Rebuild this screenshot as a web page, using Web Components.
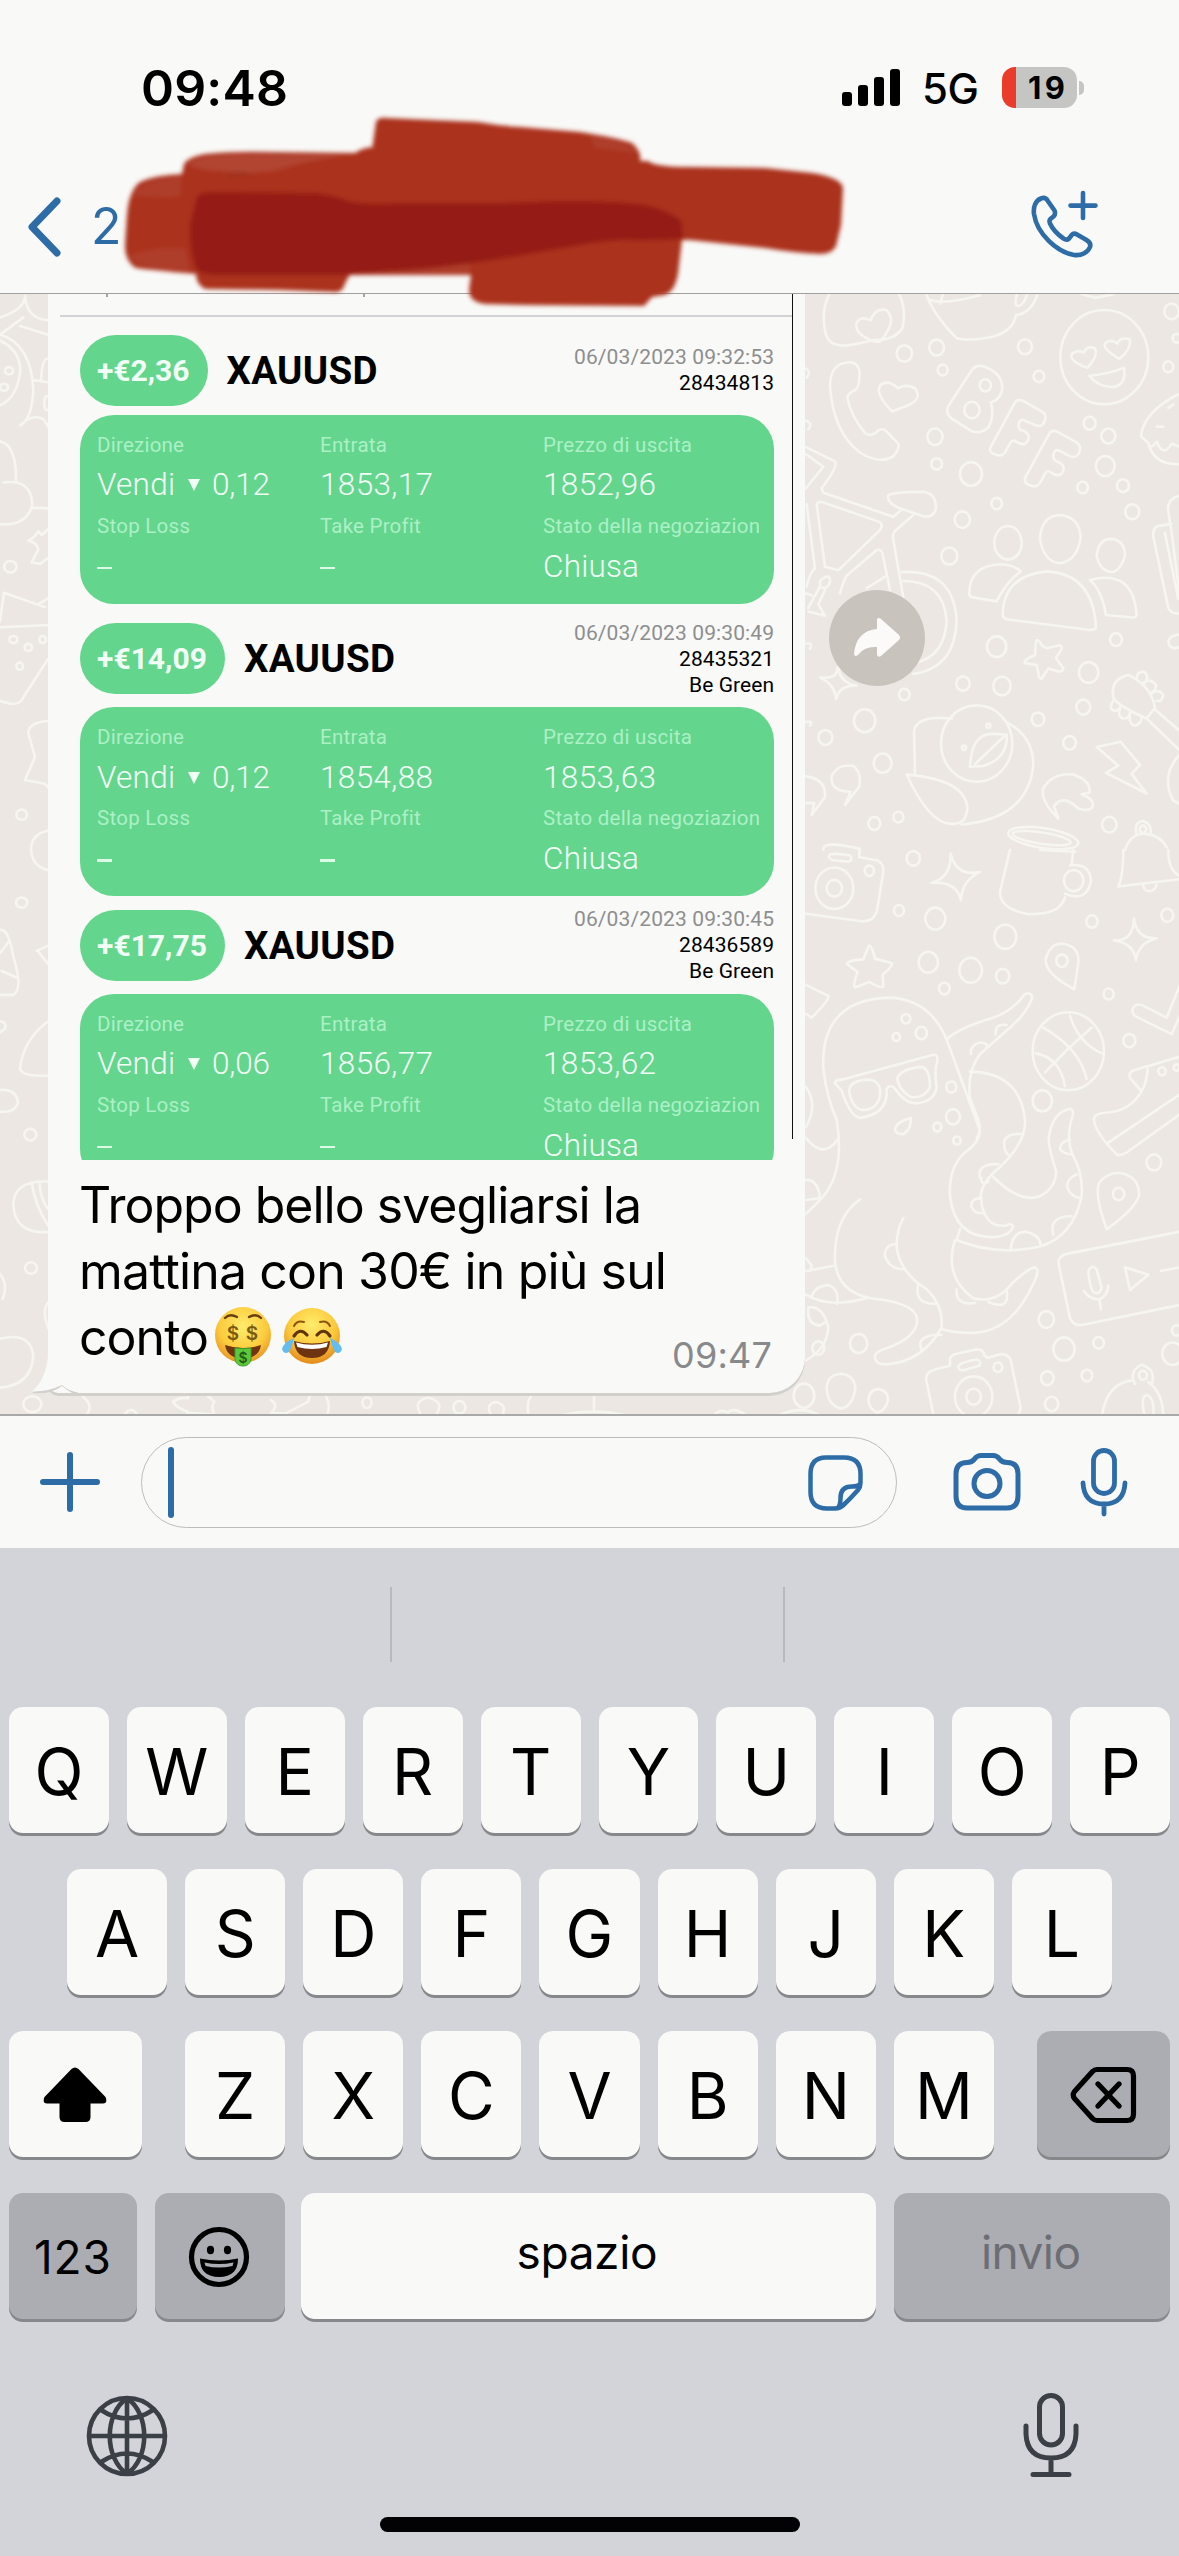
<!DOCTYPE html>
<html lang="it">
<head>
<meta charset="utf-8">
<title>Chat</title>
<style>
html,body{margin:0;padding:0;background:#f9f9f7}
body{width:1179px;height:2556px;overflow:hidden;font-family:Inter,"Liberation Sans",sans-serif;color:#000}
</style>
</head>
<body>
<chat-app></chat-app>
<script>
const define = (name, html, init) => customElements.define(name, class extends HTMLElement {
  connectedCallback() {
    if (this.shadowRoot) return;
    const root = this.attachShadow({ mode: 'open' });
    root.innerHTML = typeof html === 'function' ? html(this) : html;
    if (init) init(this, root);
  }
});

/* Single line of text tracked to an exact advance width. */
define('fit-text', `<style>:host{display:inline-block;white-space:nowrap;flex:none}span{display:inline-block}</style><span><slot></slot></span>`,
  (el, root) => {
    const w = +el.getAttribute('w');
    el.style.width = (+el.getAttribute('box') || w) + 'px';
    const s = root.querySelector('span');
    const n = el.textContent.length;
    const natural = s.getBoundingClientRect().width;
    s.style.letterSpacing = ((w - natural) / Math.max(1, n - 1)).toFixed(3) + 'px';
  });

define('status-bar', `<style>
:host{display:flex;height:175px;box-sizing:border-box;padding:62px 95px 0 141px;align-items:flex-start}
.time{font-weight:600;font-size:50px;line-height:52px}
.grow{flex:1}
.net{font-size:42px;line-height:54px;margin:0 23px 0 22px;font-weight:500}
.sig{margin-top:7px}
.bat{display:flex;align-items:center;margin-top:5px;gap:2px}
.cell{width:75px;height:41px;border-radius:13px;background:linear-gradient(90deg,#eb3b2b 14px,#c5c6c3 14px);font-weight:700;font-size:31px;line-height:41px;box-sizing:border-box;padding-left:26px}
.nub{width:5px;height:14px;background:#c5c6c3;border-radius:0 5px 5px 0}
</style>
<fit-text class="time" w="147">09:48</fit-text><div class="grow"></div>
<svg class="sig" width="58" height="38" viewBox="0 0 58 38"><rect y="23" width="10" height="14" rx="3"/><rect x="16" y="16" width="10" height="21" rx="3"/><rect x="32" y="8" width="10" height="29" rx="3"/><rect x="48" width="10" height="37" rx="3"/></svg>
<fit-text class="net" w="57">5G</fit-text>
<div class="bat"><div class="cell"><fit-text w="37">19</fit-text></div><div class="nub"></div></div>`);

define('chat-header', `<style>
:host{display:flex;height:118px;box-sizing:border-box;padding:14px 80px 0 26px;color:#2e6ca8;align-items:flex-start;justify-content:space-between}
.back{display:flex;gap:29px;align-items:center;margin-top:6px}
.n{font-size:50px;line-height:62px}
</style>
<div class="back"><svg width="36" height="62" viewBox="0 0 36 62"><path d="M31 6 L6 32 L31 58" fill="none" stroke="#2e6ca8" stroke-width="7" stroke-linecap="round" stroke-linejoin="round"/></svg><span class="n">2</span></div>
<svg width="70" height="72" viewBox="1029 189 70 72" fill="none" stroke="#2e6ca8" stroke-width="4.6" stroke-linecap="round" stroke-linejoin="round"><path d="M1041 198.500C1036 200.500 1033 206 1034 214C1037 234 1057 252 1074 255C1082 256 1088 252 1090 247C1091 244 1089 241.500 1086.500 240L1077 234.500C1074.500 233 1072.500 233.500 1071 236L1069 238.500C1067.500 240 1065.500 240 1063.500 238.500C1057 234 1053 230 1050 223.500C1049 221 1049.500 219.500 1051 218.500L1053.500 216.500C1055.500 214.500 1055.500 213 1054.500 210.500L1047.500 200.500C1046 198 1043.500 197.500 1041 198.500Z"/><path d="M1083 193V218M1070.500 205.600H1095.500"/></svg>`);

/* Marker strokes laid over the contact's name. */
define('marker-scribble', `<style>:host{position:absolute;left:0;top:0;pointer-events:none;line-height:0}</style>
<svg width="870" height="320" viewBox="0 0 870 320"><defs><filter id="s" x="-5%" y="-5%" width="110%" height="110%"><feGaussianBlur stdDeviation="1.900"/></filter></defs>
<g filter="url(#s)">
<path fill="#ab321d" d="M372 150L376 122Q378 117 386 118L478 122Q500 126 520 127L580 132Q618 138 632 143Q642 152 640 161L648 161Q655 167 690 167L765 168L812 173Q842 178 843 188L841 225L836 246Q832 254 820 254Q795 253 765 248L690 240L682 240L679 265Q677 292 664 295L652 297L644 306L525 305L485 304Q469 302 469 290L471 275L350 275Q346 280 344 286Q342 293 333 292L280 290L205 289Q196 284 196 274Q150 270 136 268Q125 262 125 245L127 215Q129 190 140 182Q155 175 182 174L184 164Q188 157 205 154Q235 151 270 152L355 153Q362 148 372 147Z"/>
<path fill="#b5503f" opacity=".6" d="M188 164Q202 154 240 154L350 155Q310 160 285 168Q260 176 218 171Q196 170 188 164Z"/>
<path fill="#b5503f" opacity=".4" d="M132 196Q140 180 182 176L180 197Q155 198 132 196ZM128 256Q150 246 185 248L190 271Q140 271 128 256ZM590 136Q634 142 638 153Q615 151 595 148ZM350 272Q420 264 470 264V274H350Z"/>
<path fill="#951f14" d="M197 196Q200 192 215 192L315 193Q335 195 348 201Q365 205 400 203L500 203L560 201Q620 201 645 205Q672 211 682 222L683 239Q650 241 625 240Q600 241 575 246L500 259Q430 270 380 272L340 275H220Q199 275 196 268Q189 250 190 225Z"/>
<path d="M228 176Q240 171 250 175" fill="none" stroke="#8c2a1c" stroke-width="1.500"/>
</g></svg>`);

const dots = (list) => list.map(([x, y, r]) => `<circle cx="${x}" cy="${y}" r="${r}"/>`).join('');

define('chat-wallpaper', () => `<style>:host{position:absolute;inset:0;background:#ece7e2;line-height:0;z-index:-1}
svg *{vector-effect:non-scaling-stroke}</style>
<svg width="1179" height="1122" viewBox="0 294 1179 1122" fill="none" stroke="#f7f5f0" stroke-width="2.600" stroke-linecap="round" stroke-linejoin="round">
<g transform="translate(780 290) scale(.3333 .3571)">
<path d="M150 8Q120 60 138 125Q150 160 205 155Q262 145 280 140Q345 142 368 105Q380 50 355 8M285 145Q225 125 229 95Q240 70 272 85Q285 50 318 56Q355 85 300 145ZM437 8Q460 70 530 135Q560 145 640 130Q700 115 708 70Q755 65 773 10M445 25Q480 45 600 15M490 8L480 38M712 8Q700 45 715 45Q735 40 742 8M905 12L945 22L1000 12"/>
<circle cx="973" cy="188" r="132" /><path d="M922 218Q868 200 875 180Q890 165 912 175Q920 155 945 163Q955 185 922 218ZM1018 193Q968 165 975 150Q990 135 1012 150Q1020 130 1050 138Q1055 165 1018 193ZM928 240Q985 235 1032 218Q1040 265 1000 272Q950 270 928 240Z"/>
<path d="M190 205Q150 215 150 270Q160 400 240 455Q300 490 340 465Q360 445 355 430L315 392Q300 385 285 402Q265 410 255 400Q210 350 202 300Q205 290 225 280Q240 275 238 225Q230 195 190 205ZM336 340Q285 290 300 268Q320 248 355 275Q375 262 405 275Q430 305 380 325Z"/>
<path d="M575 225Q590 205 620 217Q675 240 665 285Q655 310 632 315Q645 350 625 385Q600 405 575 395L515 360Q495 345 505 325ZM632 440L705 315Q715 302 735 313L785 340Q805 350 790 375Q780 385 765 378L733 365Q720 360 717 372Q712 388 725 393Q755 402 742 425Q732 438 710 425Q697 418 692 427L675 455Q665 468 645 460Q625 455 632 440ZM736 525L808 402Q818 388 838 400L890 427Q908 438 895 460Q885 472 870 465L838 450Q825 445 822 457Q815 472 830 480Q860 490 847 512Q835 525 815 512Q802 503 796 513L782 538Q770 555 750 547Q730 540 736 525Z"/>
<path d="M1200 290Q1090 340 1083 410L1105 428Q1110 450 1130 425Q1150 470 1175 430L1200 440M1105 428Q1120 490 1200 488M1130 383H1150M1165 330L1180 320"/>
<path d="M78 440L165 480Q175 495 125 555L130 568L340 635L365 615M78 460L130 495L78 555M325 575Q345 565 430 565Q468 570 468 610Q465 635 435 635L355 610Q320 595 325 575ZM110 600Q115 590 130 595L300 650Q310 660 300 672L175 785L135 775ZM400 630L345 675Q335 685 340 700L370 860M180 850Q190 815 200 800L290 728Q305 725 308 740L330 840M80 600L105 780Q90 790 80 830M320 800L260 835M120 815Q150 790 150 815Q145 840 120 832ZM120 830L85 890M135 840L115 880L135 912L85 900M78 850L95 855"/>
<path d="M365 790Q520 780 530 925Q525 1060 400 1075M370 815Q490 815 500 925Q495 1020 415 1042"/>
<ellipse cx="684" cy="708" rx="41" ry="47"/><path d="M780 695Q785 632 840 630Q900 635 902 695Q890 760 838 765Q790 760 780 695ZM950 745Q955 698 993 697Q1035 700 1035 745Q1020 790 990 790Q960 785 950 745ZM568 855Q565 770 665 768Q700 770 723 788Q680 815 650 872L575 860ZM668 910Q670 800 800 788Q940 795 948 945Q945 952 930 952L680 922Q668 918 668 910ZM930 812Q1060 780 1070 910Q1068 918 1055 917L978 910Q965 840 930 812ZM1200 575Q1160 585 1165 620L1175 680L1200 860M1175 655L1130 662Q1118 670 1120 690L1165 890Q1175 910 1200 905M1155 680L1195 865"/>
<path d="M768 983Q775 975 785 995L800 1003L838 995Q850 998 842 1010L828 1030L850 1060Q848 1070 835 1068L805 1060L785 1088Q775 1090 775 1070L770 1050L735 1045Q730 1035 765 1022ZM120 1085Q160 1090 170 1070Q175 1040 178 1070Q185 1100 230 1108Q180 1105 168 1145Q165 1105 120 1085Z"/>
<path d="M1045 1078Q990 1090 1000 1140Q1005 1160 1100 1200L1125 1170Q1115 1110 1045 1078ZM1070 1090Q1070 1065 1095 1070Q1110 1085 1090 1105M1090 1100Q1110 1085 1128 1105Q1130 1120 1110 1130M1115 1130Q1140 1115 1150 1135Q1145 1155 1130 1150M1000 1150Q985 1170 1000 1178Q1020 1180 1022 1165M1022 1168Q1010 1195 1030 1200Q1050 1200 1050 1180M1050 1185Q1045 1215 1065 1220Q1085 1215 1085 1195M1125 1175L1200 1235M1100 1200L1200 1290M1200 1300Q1140 1360 1180 1430L1200 1440"/>
<circle cx="590" cy="1270" r="107"/><path d="M515 1200Q410 1190 402 1235L405 1355M680 1210Q760 1250 760 1330Q745 1480 545 1497M380 1357Q555 1370 562 1450Q560 1495 520 1495Q450 1500 380 1357ZM570 1335Q575 1240 640 1243L680 1245Q685 1310 610 1333ZM585 1328L675 1248M950 1280L1022 1265L1080 1330L1055 1355L1100 1410L978 1352L1015 1332ZM835 1480Q780 1430 790 1395Q820 1350 880 1357Q935 1375 928 1408L905 1412Q945 1425 938 1448Q925 1462 895 1452Q850 1410 822 1445ZM195 1442L212 1405Q150 1405 155 1360Q175 1325 220 1333Q245 1350 238 1390ZM78 1362Q140 1370 135 1420L95 1470L103 1437H80"/>
<ellipse cx="790" cy="1535" rx="106" ry="28" transform="rotate(8 790 1535)"/><ellipse cx="785" cy="1535" rx="88" ry="16" transform="rotate(8 785 1535)"/><path d="M1070 1525Q1060 1490 1090 1487Q1115 1495 1112 1520M1035 1568Q1050 1525 1090 1522Q1140 1525 1160 1560M130 1568Q125 1540 240 1565M78 1210Q100 1205 90 1220M78 990Q100 985 90 1005M78 220Q95 230 80 245M78 365Q100 375 85 390M1200 1000Q1170 1010 1165 985Q1170 965 1200 965"/>
${dots([[373,178,23],[470,161,22],[488,224,15],[735,159,21],[777,242,16],[616,267,17],[576,336,23],[465,411,23],[470,487,16],[573,515,33],[650,598,16],[547,643,23],[508,745,24],[929,373,18],[985,409,21],[976,493,28],[908,553,16],[1029,548,18],[1057,621,21],[1175,60,22],[1165,215,15],[1190,135,12],[650,999,29],[1008,979,18],[926,1071,29],[549,1102,20],[666,1109,26],[373,1133,16],[910,1168,21],[774,1202,19],[869,1268,19],[254,1206,32],[136,1253,21],[308,1325,27],[283,1494,18],[355,1476,15],[988,1497,22],[625,1220,6],[552,1282,6],[1089,1510,10]])}
</g>
<g transform="translate(780 850) scale(.3333 .3645)">
<path d="M78 175L240 195Q285 200 292 160L310 60Q312 35 290 28L238 20V0M150 12Q175 8 210 15Q220 28 205 32L160 28Q140 22 150 12ZM455 90Q515 75 512 10Q530 75 600 60Q545 85 543 138Q530 85 455 90ZM690 0L660 115Q660 160 740 175Q840 180 855 130M880 0L875 40M855 120Q920 145 933 85Q930 35 870 42M780 0L885 5M1030 0Q1030 70 1015 100L1200 80M1090 98Q1095 115 1110 113Q1130 110 1130 90M1165 0Q1165 60 1200 70"/>
<circle cx="163" cy="105" r="57"/><circle cx="163" cy="105" r="23"/><circle cx="268" cy="57" r="14"/><circle cx="881" cy="84" r="29"/>
<path d="M267 262Q275 260 285 298L335 310Q340 318 308 342L310 375Q300 380 268 362L225 377Q218 370 233 335L200 312Q205 302 250 300ZM1002 248Q1060 250 1062 188Q1070 245 1130 242Q1075 255 1068 302Q1060 255 1002 248ZM78 370L145 400Q150 410 95 460L78 450M883 382Q795 340 797 300Q810 255 850 257Q900 265 895 310ZM1200 370L1160 460L1085 425Q1065 420 1058 437Q1055 450 1070 458L1175 505L1200 455"/>
<path d="M130 600Q120 410 330 405Q450 410 500 520L560 670L600 770Q600 800 555 830Q505 870 510 950Q525 1065 640 1062Q690 1060 700 1032Q690 1022 680 1030Q610 1040 602 950Q605 910 660 870Q740 800 735 740Q720 610 570 608M130 600Q140 680 170 740Q195 880 130 950Q110 970 78 998M500 520Q530 490 640 460Q700 440 735 395Q755 390 757 405Q740 450 680 495L600 560Q560 610 570 680L595 740Q605 770 590 790M78 790Q130 850 172 795M78 905Q115 905 120 955L78 960M78 650Q115 700 78 760"/>
<path d="M165 640Q165 630 185 630L460 562Q475 560 472 580Q462 605 470 650Q465 690 410 695Q375 695 345 655Q330 640 320 655Q325 725 240 735Q210 730 185 660ZM208 665Q205 632 265 630Q305 632 300 675Q290 715 245 713Q215 705 208 665ZM352 625Q365 600 425 595Q450 600 450 650Q435 680 395 678Q355 660 352 625ZM345 765Q350 745 392 735Q395 765 370 780Q345 780 345 765Z"/>
<circle cx="865" cy="552" r="107"/><path d="M790 487Q900 545 920 628M870 455Q895 530 970 560M768 558Q840 570 855 648M935 487L865 545L795 610"/>
<path d="M1200 567L1060 605Q1045 610 1050 625L1085 662Q1050 715 985 720Q940 722 942 740Q945 775 1010 835Q1020 840 1040 830L1200 725M985 803L1200 670M1103 600Q1100 640 1085 662"/>
<path d="M640 897Q720 970 780 950Q830 925 828 880Q800 800 808 780Q820 720 870 710Q882 710 878 730Q855 790 880 840Q910 890 905 950Q880 1060 780 1088Q650 1115 530 1070M530 1070L540 1040M525 1070Q490 1170 580 1230Q650 1245 695 1190Q740 1150 765 1145Q780 1150 765 1180Q700 1320 580 1325Q520 1325 485 1315M240 958Q160 1010 165 1130Q175 1220 290 1232Q410 1245 412 1290Q410 1340 310 1370Q280 1380 285 1395Q290 1415 330 1410Q430 1400 485 1310Q490 1250 440 1205Q360 1160 350 1090Q350 1040 370 1010M980 1040Q940 940 960 910Q990 880 1030 888Q1080 900 1077 950Q1060 990 980 1040Z"/>
<path d="M573 560Q570 535 600 528Q625 530 620 540M647 505Q645 475 680 480M673 800Q680 775 730 780M690 840Q670 830 673 800M600 900Q590 860 655 862M605 900Q600 920 625 910M605 955Q570 955 575 980Q585 1000 610 995M870 795Q840 800 840 820Q850 835 878 835M890 890Q860 900 862 925Q870 950 900 955M820 1055Q805 1005 875 1005M692 1098Q695 1050 735 1047Q780 1055 782 1085M350 1080Q310 1085 315 1115Q330 1150 372 1150M415 1190Q400 1245 465 1245M425 1370Q405 1330 485 1330M530 1205Q525 1250 585 1243M625 1240Q690 1265 680 1210M78 1155L165 1140M78 1120L95 1140L90 1155M95 1225Q110 1190 150 1195Q180 1210 170 1245M78 1220Q150 1260 265 1228M85 1255Q130 1250 145 1310Q140 1370 78 1400M85 1260Q80 1300 120 1305L137 1295"/>
<path d="M1200 1047L860 1108Q830 1115 837 1140L870 1285Q880 1305 905 1303L1200 1248M925 1155Q935 1135 950 1150L965 1200Q960 1220 945 1215Q930 1210 925 1155ZM912 1210Q930 1235 960 1232Q985 1220 985 1195M958 1232L963 1260M1035 1145L1105 1165L1050 1207ZM1143 1155L1200 1145M462 1557L438 1450Q440 1430 465 1425L510 1415V1395Q515 1385 530 1382L590 1370Q612 1370 612 1385L622 1393L665 1383Q688 1385 692 1400L722 1530Q720 1550 700 1557M535 1418Q540 1405 590 1398Q605 1400 598 1415L550 1427Q535 1428 535 1418ZM965 1557Q980 1460 1060 1455M1105 1460Q1150 1490 1150 1557M1095 1557Q1080 1500 1100 1495Q1125 1500 1120 1557M0 1550Q70 1520 130 1557M160 1550H210"/>
<circle cx="581" cy="1500" r="56"/><circle cx="581" cy="1500" r="22"/><circle cx="654" cy="1419" r="13"/><path d="M1065 1465Q1045 1430 1085 1412Q1130 1425 1115 1465"/><circle cx="1089" cy="1441" r="12"/>
<path d="M140 1480Q140 1440 182 1437Q225 1440 226 1480Q215 1530 182 1532Q145 1525 140 1480ZM265 1510Q268 1480 294 1479Q325 1482 324 1510Q315 1540 293 1543Q270 1538 265 1510Z"/><ellipse cx="72" cy="1497" rx="31" ry="33"/>
${dots([[400,23,20],[357,166,15],[466,188,30],[676,238,33],[445,308,29],[572,330,34],[668,346,20],[493,380,16],[936,196,17],[846,304,17],[986,395,15],[1162,179,18],[1048,523,18],[378,463,13],[424,502,17],[349,513,11],[514,650,15],[519,732,21],[472,760,12],[531,797,11],[787,688,29],[1146,607,11],[1190,597,9],[1122,857,22],[1016,944,17],[799,1288,23],[852,1369,32],[956,1352,16],[802,1449,19],[921,1442,16],[236,1354,26],[1178,1382,31],[1190,1318,14],[815,1520,20],[115,1366,18]])}
</g>
<g transform="translate(0 290) scale(.3333 .7207)">
<path d="M0 62Q95 75 100 140Q95 180 60 188M0 70Q65 85 60 115Q50 150 0 160M0 38Q70 28 75 10M0 62L70 38M60 50L144 62M75 8Q80 40 144 42M123 127Q125 95 144 95M100 125L144 128M80 180Q130 170 144 190M0 210Q50 215 48 265M10 267Q95 262 97 298Q80 328 0 325M95 302L144 303M85 348Q100 345 115 335L125 340L144 332M85 348Q110 350 115 360L95 378L120 380L144 372M0 460L12 420L135 440M118 435L144 428M0 468L144 465M0 570Q60 580 70 565L144 512M144 598Q85 600 85 615Q100 640 105 648L75 680L135 685L144 690M144 750Q95 755 93 775Q95 800 144 805M110 917L144 910M115 918L144 935M0 888Q25 885 40 925Q70 970 40 978H0M5 945L55 955M0 920L25 905M144 1015Q70 1040 60 1080Q65 1092 144 1090M40 1270Q40 1235 144 1237M40 1270Q45 1310 144 1307M95 1238Q105 1270 144 1298M118 1237Q120 1260 144 1275M0 1365Q25 1380 8 1400M0 1455Q90 1445 100 1478Q95 1520 0 1523M0 1015Q20 1015 15 1025L0 1030M0 1110Q50 1108 54 1128Q45 1142 0 1140M144 1405Q125 1415 144 1440"/>
<ellipse cx="27" cy="112" rx="12" ry="5"/><ellipse cx="12" cy="135" rx="12" ry="5"/><ellipse cx="31" cy="384" rx="19" ry="8"/><ellipse cx="40" cy="485" rx="12" ry="5"/><ellipse cx="85" cy="496" rx="11" ry="5"/><ellipse cx="128" cy="485" rx="10" ry="5"/><ellipse cx="59" cy="522" rx="10" ry="5"/><ellipse cx="65" cy="728" rx="16" ry="7"/><ellipse cx="65" cy="850" rx="17" ry="7"/><ellipse cx="91" cy="1172" rx="18" ry="8"/><ellipse cx="93" cy="1357" rx="18" ry="8"/><ellipse cx="97" cy="1546" rx="27" ry="11"/><ellipse cx="141" cy="157" rx="8" ry="10"/>
</g>
<g transform="translate(0 1380) scale(.7519 .3333)"><path d="M110 50Q125 75 115 105M230 65Q240 50 250 55V45M230 65Q235 85 250 95Q240 100 285 103Q280 80 285 65L275 45M360 60Q372 75 360 100H380L410 65L412 45M434 50Q440 80 435 105M165 105Q175 75 183 105M703 105Q700 65 706 50M790 50V95M748 105Q790 85 830 105M950 105Q958 85 968 98Q975 80 992 105"/><ellipse cx="488" cy="68" rx="6" ry="16"/><path d="M560 105Q548 60 570 53Q592 65 580 105M653 105Q645 70 660 66Q675 75 668 105"/><ellipse cx="611" cy="82" rx="8" ry="19"/></g>
</svg>`);

define('trade-entry', (el) => {
  const a = (n) => el.getAttribute(n);
  return `<style>
:host{display:block;width:694px;font-family:Roboto,"Liberation Sans",sans-serif;flex:none}
.head{display:flex;height:71px;align-items:center}
.pill{height:71px;border-radius:36px;background:#63d58d;color:#f2fff6;font-weight:700;font-size:30px;line-height:71px;padding:0 18px 0 17px}
.sym{font-weight:700;font-size:38.500px;line-height:71px;margin-left:19px}
.meta{margin-left:auto;display:flex;flex-direction:column;align-items:flex-end;font-size:21px;line-height:26px}
.meta .d{color:#8d8e90}
.card{margin-top:${a('gap')}px;height:189px;box-sizing:border-box;background:#63d58d;border-radius:34px;padding:10px 15px 0 17px;display:grid;grid-template-columns:223px 223px 216px;grid-template-rows:repeat(4,40.600px)}
.l{font-size:20.500px;line-height:40px;color:#abf0c6;overflow:hidden}
.v{font-size:31.500px;line-height:40px;color:#f4fff8;display:flex;align-items:center;font-weight:350}
.dash{width:15px;height:2.500px;background:#dcfae6;margin-top:3px}
.tri{width:0;height:0;border:6.500px solid transparent;border-top:12px solid #f2fff6;border-bottom:0;margin:0 12px 0 13px;flex:none}
</style>
<div class="head"><div class="pill"><fit-text w="${a('pw')}">${a('profit')}</fit-text></div>
<fit-text class="sym" w="151">XAUUSD</fit-text>
<div class="meta"><fit-text class="d" w="200">${a('date')}</fit-text><fit-text w="95">${a('order')}</fit-text>${a('note') ? `<fit-text w="85">${a('note')}</fit-text>` : ''}</div></div>
<div class="card">
<div class="l"><fit-text w="87">Direzione</fit-text></div><div class="l"><fit-text w="67">Entrata</fit-text></div><div class="l"><fit-text w="149">Prezzo di uscita</fit-text></div>
<div class="v"><fit-text w="78">Vendi</fit-text><i class="tri"></i><fit-text w="58">${a('lots')}</fit-text></div><div class="v"><fit-text w="113">${a('entry')}</fit-text></div><div class="v"><fit-text w="113">${a('exit')}</fit-text></div>
<div class="l"><fit-text w="93">Stop Loss</fit-text></div><div class="l"><fit-text w="100">Take Profit</fit-text></div><div class="l"><fit-text w="217">Stato della negoziazion</fit-text></div>
<div class="v"><i class="dash"></i></div><div class="v"><i class="dash"></i></div><div class="v"><fit-text w="96">Chiusa</fit-text></div>
</div>`;
});

define('money-emoji', `<style>:host{display:block;line-height:0}text{font:600 19px Inter,sans-serif;fill:#7a5a10;text-anchor:middle}</style>
<svg width="58" height="62" viewBox="0 0 58 62" role="img"><defs><radialGradient id="g" cx=".5" cy=".35" r=".7"><stop offset="0" stop-color="#ffec6c"/><stop offset=".6" stop-color="#fccb3d"/><stop offset="1" stop-color="#e48a1c"/></radialGradient></defs>
<circle cx="29" cy="29" r="28" fill="url(#g)"/><path d="M11 12Q16 7 23 11M35 11Q42 7 47 12" fill="none" stroke="#6b3d0c" stroke-width="2.400" stroke-linecap="round"/>
<text x="19" y="34">$</text><text x="38" y="34">$</text>
<path d="M11 39Q29 45 47 39Q45 52 29 53Q13 52 11 39Z" fill="#713410"/><path d="M21 42Q29 43.500 37 42V54Q35 60 29 60Q23 60 21 54Z" fill="#5cc93c" stroke="#3b9e28" stroke-width="1"/><text x="29" y="57" style="font-size:14px;fill:#245c1b">$</text></svg>`);

define('joy-emoji', `<style>:host{display:block;line-height:0}</style>
<svg width="62" height="60" viewBox="0 0 62 60" role="img"><defs><radialGradient id="g" cx=".5" cy=".3" r=".7"><stop offset="0" stop-color="#ffec6c"/><stop offset=".6" stop-color="#fcc93b"/><stop offset="1" stop-color="#e3891b"/></radialGradient></defs>
<circle cx="31" cy="29" r="28" fill="url(#g)"/><path d="M13 19Q16 13 23 15M39 15Q46 13 49 19" fill="none" stroke="#8c5410" stroke-width="2" stroke-linecap="round"/><path d="M13 29Q19 20 26 28M36 28Q43 20 49 29" fill="none" stroke="#5f350b" stroke-width="3.200" stroke-linecap="round"/>
<path d="M13 34Q31 39 49 34Q48 51 31 51Q14 51 13 34Z" fill="#6e3411"/><path d="M15 35.500Q31 40 47 35.500L45.500 40Q31 44 16.500 40Z" fill="#fff"/>
<path d="M13 31Q11 40 8 45Q3 48 1 42Q2 36 13 31ZM49 31Q51 40 54 45Q59 48 61 42Q60 36 49 31Z" fill="#63bdf0"/></svg>`);

define('message-bubble', `<style>
:host{display:flex;flex-direction:column;position:relative;width:757px;height:1099px;background:#f9f9f7;border-radius:0 0 36px 10px;box-shadow:0 3px 0 #d3d0cb;flex:none;margin-left:48px}
.pic{height:866px;overflow:hidden;margin-left:12px;width:733px;box-sizing:border-box;background:linear-gradient(#111,#111) right top/1.500px 845px no-repeat;display:flex;flex-direction:column;flex:none}
.tabs{flex:none;height:21px;border-bottom:2px solid #d2d3d5;box-sizing:content-box;padding-left:46px;width:686px;display:flex;gap:255px}
.tabs i{width:2px;height:3px;background:#a3a3a5}
.e{padding-left:20px}
.txt{padding-left:31px;margin-top:12px;font-size:50px;line-height:66px}
.row{display:flex;height:66px;align-items:center}
.time{margin-left:auto;margin-right:33px;font-size:36px;color:#88898b;line-height:40px;margin-top:36px}
.tail{position:absolute;left:-18px;bottom:-4px}
</style>
<svg class="tail" width="50" height="54" viewBox="0 0 50 54"><path d="M18 0Q20 38 2 50Q20 52 32 43Q40 50 50 53" fill="#d3d0cb" /><path d="M18 0V8Q18 34 2 48.500Q18 49 32 42Q38 48 50 50V0Z" fill="#f9f9f7"/></svg>
<div class="pic"><div class="tabs"><i></i><i></i></div>
<trade-entry class="e" style="margin-top:17.500px" gap="9" profit="+€2,36" pw="92.500" date="06/03/2023 09:32:53" order="28434813" lots="0,12" entry="1853,17" exit="1852,96"></trade-entry>
<trade-entry class="e" style="margin-top:19.500px" gap="13" profit="+€14,09" pw="110" date="06/03/2023 09:30:49" order="28435321" note="Be Green" lots="0,12" entry="1854,88" exit="1853,63"></trade-entry>
<trade-entry class="e" style="margin-top:13.500px" gap="13" profit="+€17,75" pw="110" date="06/03/2023 09:30:45" order="28436589" note="Be Green" lots="0,06" entry="1856,77" exit="1853,62"></trade-entry>
</div>
<div class="txt"><div class="row"><fit-text w="563">Troppo bello svegliarsi la</fit-text></div><div class="row"><fit-text w="588">mattina con 30€ in più sul</fit-text></div>
<div class="row"><fit-text w="130">conto</fit-text><money-emoji style="margin-left:5px"></money-emoji><joy-emoji style="margin-left:9px"></joy-emoji><fit-text class="time" w="100">09:47</fit-text></div></div>`);

define('forward-button', `<style>:host{display:flex;width:96px;height:96px;border-radius:50%;background:#c8c4bd;align-items:center;justify-content:center;margin:295.500px 0 0 24px}</style>
<svg width="48" height="42" viewBox="0 0 48 42"><path d="M24 2Q26 0 28 2L46 18Q48 20.500 46 23L28 39Q25 41 24 38V30Q12 29 6 37Q2 41 1 37Q3 14 24 12Z" fill="#fbfaf8"/></svg>`);

define('chat-area', `<style>:host{display:flex;align-items:flex-start;position:relative;z-index:0;height:1123px;overflow:hidden;border-top:1px solid #a0a0a1;border-bottom:2px solid #a9a9a9;box-sizing:border-box}</style>
<chat-wallpaper></chat-wallpaper><message-bubble></message-bubble><forward-button></forward-button>`);

define('input-bar', `<style>
:host{display:flex;height:132px;align-items:center;box-sizing:border-box;padding:0 49px 0 37px;background:#f9f9f7}
svg{display:block;fill:none;stroke:#2e6ca8;stroke-linecap:round;stroke-linejoin:round;flex:none}
.field{width:757px;height:91px;box-sizing:border-box;border:1.500px solid #bcbdbd;border-radius:46px;margin:0 55px 0 38px;display:flex;align-items:center;justify-content:space-between;padding:0 32px 0 26px}
.caret{width:6px;height:71px;border-radius:3px;background:#2e6ca8}
</style>
<svg width="66" height="66" stroke-width="6"><path d="M33 6V60M6 33H60"/></svg>
<div class="field"><div class="caret"></div><svg width="58" height="58" viewBox="805 1453 58 58" stroke-width="4.500"><path d="M825 1457.500H843Q859.500 1457.500 859.500 1474V1483Q859.500 1487 857 1490Q849 1499 842 1505.500Q838.500 1508.500 834 1508.500H826Q809.500 1508.500 809.500 1492V1474Q809.500 1457.500 825 1457.500ZM859 1484Q857 1486.500 851 1486.500Q839.500 1486.500 839.500 1498Q839.500 1505 837 1507.500"/></svg></div>
<svg width="70" height="62" viewBox="952 1451 70 62" stroke-width="5"><path d="M967 1462.500Q972 1462.500 974.500 1459Q977 1455.500 981 1455.500H993Q997 1455.500 999.500 1459Q1002 1462.500 1007 1462.500Q1018 1462.500 1018 1474V1496Q1018 1508 1007 1508H967Q956 1508 956 1496V1474Q956 1462.500 967 1462.500Z"/><circle cx="987" cy="1483.500" r="13"/></svg>
<svg style="margin-left:56px" width="52" height="72" viewBox="1078 1447 52 72" stroke-width="4.800"><rect x="1093.500" y="1451.500" width="21" height="43" rx="10.500"/><path d="M1083 1484Q1084 1505 1104 1505Q1124 1505 1125 1484M1104 1506V1515"/></svg>`);

define('key-cap', `<style>
:host{display:flex;border-radius:14px;background:#f9f9f7;box-shadow:0 3px 0 #87888b;align-items:center;justify-content:center;font-size:64px;line-height:122px;flex:1;min-width:0;padding-top:4px;height:122px}
:host([fn]){background:#abadb3}
</style><slot></slot>`);

define('key-row', `<style>:host{display:flex;gap:18px;height:126px}</style><slot></slot>`);

const caps = (s) => [...s].map((c) => `<key-cap>${c}</key-cap>`).join('');

define('soft-keyboard', () => `<style>
:host{display:flex;flex-direction:column;height:1008px;background:#d2d4d9;box-sizing:border-box;padding:39px 9px 0}
.sug{display:flex;height:75px;margin-bottom:45px;padding-left:381px;gap:391px}
.sug i{width:2px;background:#b7b9bd}
.keys{display:flex;flex-direction:column;gap:36px}
.s{font-size:46px}
svg{display:block;flex:none;margin-top:-3px}
.keys svg{margin-left:-2px}
.foot svg{margin:0}
.foot{display:flex;justify-content:space-between;align-items:center;padding:0 89px 0 75px;margin-top:70px;height:92px}
.home{width:420px;height:15px;border-radius:8px;background:#020204;margin:36px auto 0;flex:none}
</style>
<div class="sug"><i></i><i></i></div>
<div class="keys">
<key-row>${caps('QWERTYUIOP')}</key-row>
<key-row style="padding:0 58px">${caps('ASDFGHJKL')}</key-row>
<key-row><key-cap style="flex:0 0 133px"><svg width="66" height="56" viewBox="0 0 66 56"><path d="M29.500 2Q33 -1 36.500 2L63.500 30Q66 36 61 36.500H48.500V50Q48.500 55 43.500 55H22.500Q17.500 55 17.500 50V36.500H5Q0 36 2.500 30Z"/></svg></key-cap>
<key-row style="flex:1;padding:0 25px">${caps('ZXCVBNM')}</key-row>
<key-cap fn style="flex:0 0 133px"><svg style="margin-left:0" width="68" height="58" viewBox="0 0 68 58" fill="none" stroke="#000" stroke-width="5.200" stroke-linecap="round" stroke-linejoin="round"><path d="M27 3.500H57Q63.500 3.500 63.500 10V48Q63.500 54.500 57 54.500H27Q24.500 54.500 22.500 52.500L4.500 32.500Q2 29 4.500 25.500L22.500 5.500Q24.500 3.500 27 3.500ZM28 18L49 40M49 18L28 40"/></svg></key-cap></key-row>
<key-row><key-cap fn style="flex:0 0 128px"><fit-text class="s" w="77" style="margin-left:-1px;margin-top:-3px">123</fit-text></key-cap>
<key-cap fn style="flex:0 0 130px"><svg width="62" height="62" viewBox="0 0 62 62"><circle cx="31" cy="31" r="27.500" fill="none" stroke="#000" stroke-width="5.200"/><ellipse cx="22.500" cy="24" rx="3.600" ry="4.200"/><ellipse cx="39.500" cy="24" rx="3.600" ry="4.200"/><path d="M12 32.500Q31 36.500 50 32.500Q50 51 31 51Q12 51 12 32.500Z"/><path d="M16.500 36.500Q31 39.500 45.500 36.500L44.500 40Q31 43 17.500 40Z" fill="#abadb3"/></svg></key-cap>
<key-cap style="flex:0 0 575px;margin-left:-2px"><fit-text class="s" w="141" style="line-height:116px;margin:-12px 0 0 -3px">spazio</fit-text></key-cap>
<key-cap fn><fit-text class="s" w="100" style="color:#6c6e73;line-height:116px;margin:-12px 0 0 -2px">invio</fit-text></key-cap></key-row>
</div>
<div class="foot"><svg style="margin-top:2px" width="86" height="86" viewBox="-43 -43 86 86" fill="none" stroke="#3b4047" stroke-width="4.600"><circle r="38"/><path d="M0 -38V38M-38 0H38M0 -38C-23 -22 -23 22 0 38M0 -38C23 -22 23 22 0 38M-26 -26Q0 -9 26 -26M-26 26Q0 9 26 26"/></svg>
<svg width="60" height="90" viewBox="1021 2388 60 90" fill="none" stroke="#3b4047" stroke-width="5" stroke-linecap="round"><rect x="1039.500" y="2393.500" width="23" height="49.500" rx="11.500"/><path d="M1026 2424V2432Q1027 2456 1051 2456Q1075 2456 1076 2432V2424M1051 2457V2472M1033 2472.500H1069"/></svg></div>
<div class="home"></div>`);

define('chat-app', `<style>:host{display:flex;flex-direction:column;position:relative;width:1179px;height:2556px;background:#f9f9f7}
:host>*{flex:none}</style>
<status-bar></status-bar><chat-header></chat-header><chat-area></chat-area><input-bar></input-bar><soft-keyboard></soft-keyboard><marker-scribble></marker-scribble>`);
</script>
</body>
</html>
